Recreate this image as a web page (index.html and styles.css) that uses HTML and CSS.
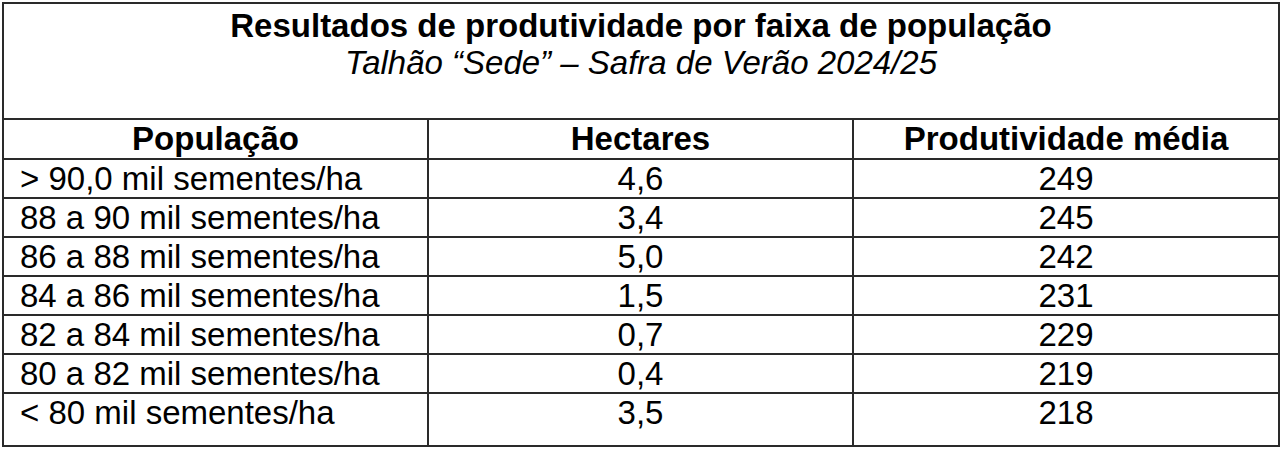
FILE: index.html
```html
<!DOCTYPE html>
<html lang="pt-BR">
<head>
<meta charset="utf-8">
<title>Resultados de produtividade</title>
<link rel="stylesheet" href="styles.css">
</head>
<body>
<table class="sheet">
  <colgroup>
    <col class="c1"><col class="c2"><col class="c3">
  </colgroup>
  <thead>
    <tr class="title-row">
      <th colspan="3" class="title-cell">
        <div class="title">Resultados de produtividade por faixa de população</div>
        <div class="subtitle">Talhão “Sede” – Safra de Verão 2024/25</div>
      </th>
    </tr>
    <tr class="head-row">
      <th>População</th>
      <th>Hectares</th>
      <th>Produtividade média</th>
    </tr>
  </thead>
  <tbody>
    <tr><td class="pop">&gt; 90,0 mil sementes/ha</td><td>4,6</td><td>249</td></tr>
    <tr><td class="pop">88 a 90 mil sementes/ha</td><td>3,4</td><td>245</td></tr>
    <tr><td class="pop">86 a 88 mil sementes/ha</td><td>5,0</td><td>242</td></tr>
    <tr><td class="pop">84 a 86 mil sementes/ha</td><td>1,5</td><td>231</td></tr>
    <tr><td class="pop">82 a 84 mil sementes/ha</td><td>0,7</td><td>229</td></tr>
    <tr><td class="pop">80 a 82 mil sementes/ha</td><td>0,4</td><td>219</td></tr>
    <tr class="last"><td class="pop">&lt; 80 mil sementes/ha</td><td>3,5</td><td>218</td></tr>
  </tbody>
</table>
</body>
</html>
```
FILE: styles.css
```css
html, body {
  margin: 0;
  padding: 0;
  background: #ffffff;
}
body {
  padding: 2px 0 0 2px;
  font-family: "Liberation Sans", Arial, sans-serif;
  color: #000;
}
.sheet {
  border-collapse: collapse;
  width: 1276px;
  table-layout: fixed;
  font-size: 33px;
  line-height: 37px;
}
.c1 { width: 425px; }
.c2 { width: 425px; }
.c3 { width: 426px; }
.sheet th, .sheet td {
  border: 2px solid #2a2a2a;
  padding: 0;
  text-align: center;
  vertical-align: top;
}
.title-row .title-cell {
  height: 111px;
  padding-top: 3px;
}
.title {
  font-weight: bold;
}
.subtitle {
  font-style: italic;
  font-weight: normal;
}
.head-row th {
  height: 38px;
  font-weight: bold;
}
.sheet td {
  height: 37px;
}
.sheet td.pop {
  text-align: left;
  padding-left: 16px;
}
.sheet tr.last td {
  height: 51px;
}
```
